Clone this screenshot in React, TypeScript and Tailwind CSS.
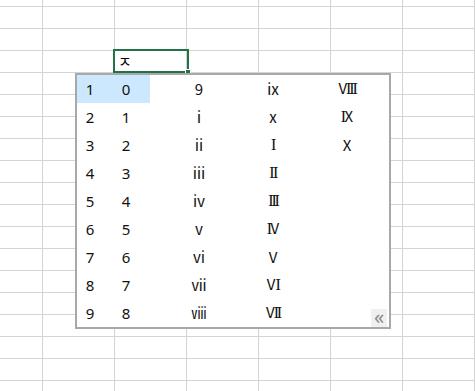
import React from "react";

const COL_CLASSES = [
  "w-[43px]",
  "w-[72px]",
  "w-[72px]",
  "w-[72px]",
  "w-[72px]",
  "w-[72px]",
  "w-[72px]",
];

const SANS = "font-['Noto_Sans','Noto_Sans_CJK_KR',sans-serif]";
const CJK = "font-['Noto_Sans_CJK_KR','Noto_Sans',sans-serif]";
const SERIF = "font-['Liberation_Serif','DejaVu_Serif',serif]";

/* uppercase roman numerals: the I strokes carry serifs, V and X are plain */
function Roman({ v }: { v: string }) {
  const tight = v.length > 2;
  return (
    <span className="inline-flex items-baseline justify-center">
      {v.split("").map((ch, i) =>
        ch === "I" ? (
          <span
            key={i}
            className={
              SERIF +
              " text-[16px] " +
              (tight ? "tracking-[-2.2px]" : "tracking-[-1.5px]")
            }
          >
            I
          </span>
        ) : (
          <span key={i} className={CJK + (tight ? " tracking-[-1px]" : "")}>
            {ch}
          </span>
        )
      )}
    </span>
  );
}

const data: [string, string, string, string][] = [
  ["0", "9", "ⅸ", "VIII"],
  ["1", "ⅰ", "ⅹ", "IX"],
  ["2", "ⅱ", "I", "X"],
  ["3", "ⅲ", "II", ""],
  ["4", "ⅳ", "III", ""],
  ["5", "ⅴ", "IV", ""],
  ["6", "ⅵ", "V", ""],
  ["7", "ⅶ", "VI", ""],
  ["8", "ⅷ", "VII", ""],
];

export default function App() {
  return (
    <div className="relative h-[391px] w-[475px] overflow-hidden bg-white">
      {/* sheet grid */}
      <div className="flex flex-col">
        {Array.from({ length: 19 }).map((_, r) => (
          <div key={r} className={"flex " + (r === 0 ? "h-[7px]" : "h-[22px]")}>
            {COL_CLASSES.map((w, c) => (
              <div key={c} className={w + " shrink-0 border-b border-r border-[#d4d4d4]"} />
            ))}
          </div>
        ))}
      </div>

      {/* active cell */}
      <div className="absolute left-[113px] top-[49px] h-[24px] w-[76px] border-2 border-[#217346]">
        <span className={CJK + " absolute left-[3px] top-[0px] text-[15px] leading-[19px] text-black"}>
          ㅈ
        </span>
        <div className="absolute bottom-[-4px] right-[-4px] h-[6px] w-[6px] border border-white bg-[#217346]" />
      </div>

      {/* candidate popup */}
      <div className="absolute left-[75px] top-[73px] h-[256px] w-[316px] border-2 border-[#a8a8a8] bg-white">
        <div className="relative flex flex-col">
          {data.map((row, i) => (
            <div key={i} className="flex h-[28px] items-center text-[15px] text-[#111]">
              <div
                className={
                  "flex h-full w-[73px] shrink-0 items-center " +
                  (i === 0 ? "bg-[#cce8ff]" : "")
                }
              >
                <span className={SANS + " w-[26px] text-center"}>{i + 1}</span>
                <span className={SANS + " w-[46px] text-center"}>{row[0]}</span>
              </div>
              <span className={CJK + " ml-[12px] w-[74px] text-center"}>{row[1]}</span>
              <span className="flex w-[74px] justify-center">
                {/^[IVX]+$/.test(row[2]) ? (
                  <Roman v={row[2]} />
                ) : (
                  <span className={CJK}>{row[2]}</span>
                )}
              </span>
              <span className="flex w-[74px] justify-center">
                {row[3] && <Roman v={row[3]} />}
              </span>
            </div>
          ))}
          <div
            className={
              SANS +
              " absolute bottom-0 right-[2px] flex h-[18px] w-[16px] items-center justify-center bg-[#f0f0f0] pb-[3px] text-[20px] leading-none text-[#8a8a8a]"
            }
          >
            «
          </div>
        </div>
      </div>
    </div>
  );
}
